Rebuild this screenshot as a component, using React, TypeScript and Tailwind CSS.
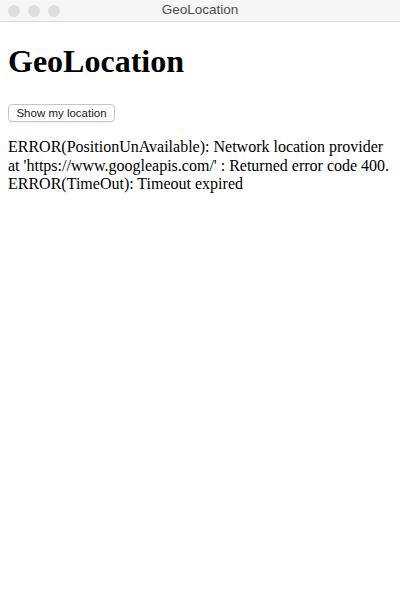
export default function App() {
  return (
    <div className="w-[400px] h-[600px] bg-white overflow-hidden flex flex-col">
      <div className="h-[22px] shrink-0 bg-[#f6f6f6] border-b border-[#d8d8d8] relative flex items-center justify-center">
        <div className="absolute left-[8px] top-[5px] flex gap-[8px]">
          <div className="w-[12px] h-[12px] rounded-full bg-[#dedede]" />
          <div className="w-[12px] h-[12px] rounded-full bg-[#dedede]" />
          <div className="w-[12px] h-[12px] rounded-full bg-[#dedede]" />
        </div>
        <span className="text-[13.5px] text-[#4d4d4d] font-['Liberation_Sans',sans-serif]">GeoLocation</span>
      </div>
      <div className="px-[8px] font-['Liberation_Serif',serif] text-black">
        <h1 className="text-[32px] font-bold leading-[37px] mt-[21px] mb-[24px]">GeoLocation</h1>
        <div className="h-[18px] flex items-start">
          <button className="h-[18px] w-[107px] flex items-center justify-center bg-white border border-[#c6c6c6] rounded-[4px] text-[11.5px] leading-[16px] font-['Liberation_Sans',sans-serif] text-[#1a1a1a] shadow-[0_1px_0_rgba(0,0,0,0.05)]">
            Show my location
          </button>
        </div>
        <div className="mt-[16px] text-[16px] leading-[18.5px]">
          <div>ERROR(PositionUnAvailable): Network location provider at 'https://www.googleapis.com/' : Returned error code 400.</div>
          <div>ERROR(TimeOut): Timeout expired</div>
        </div>
      </div>
    </div>
  );
}
